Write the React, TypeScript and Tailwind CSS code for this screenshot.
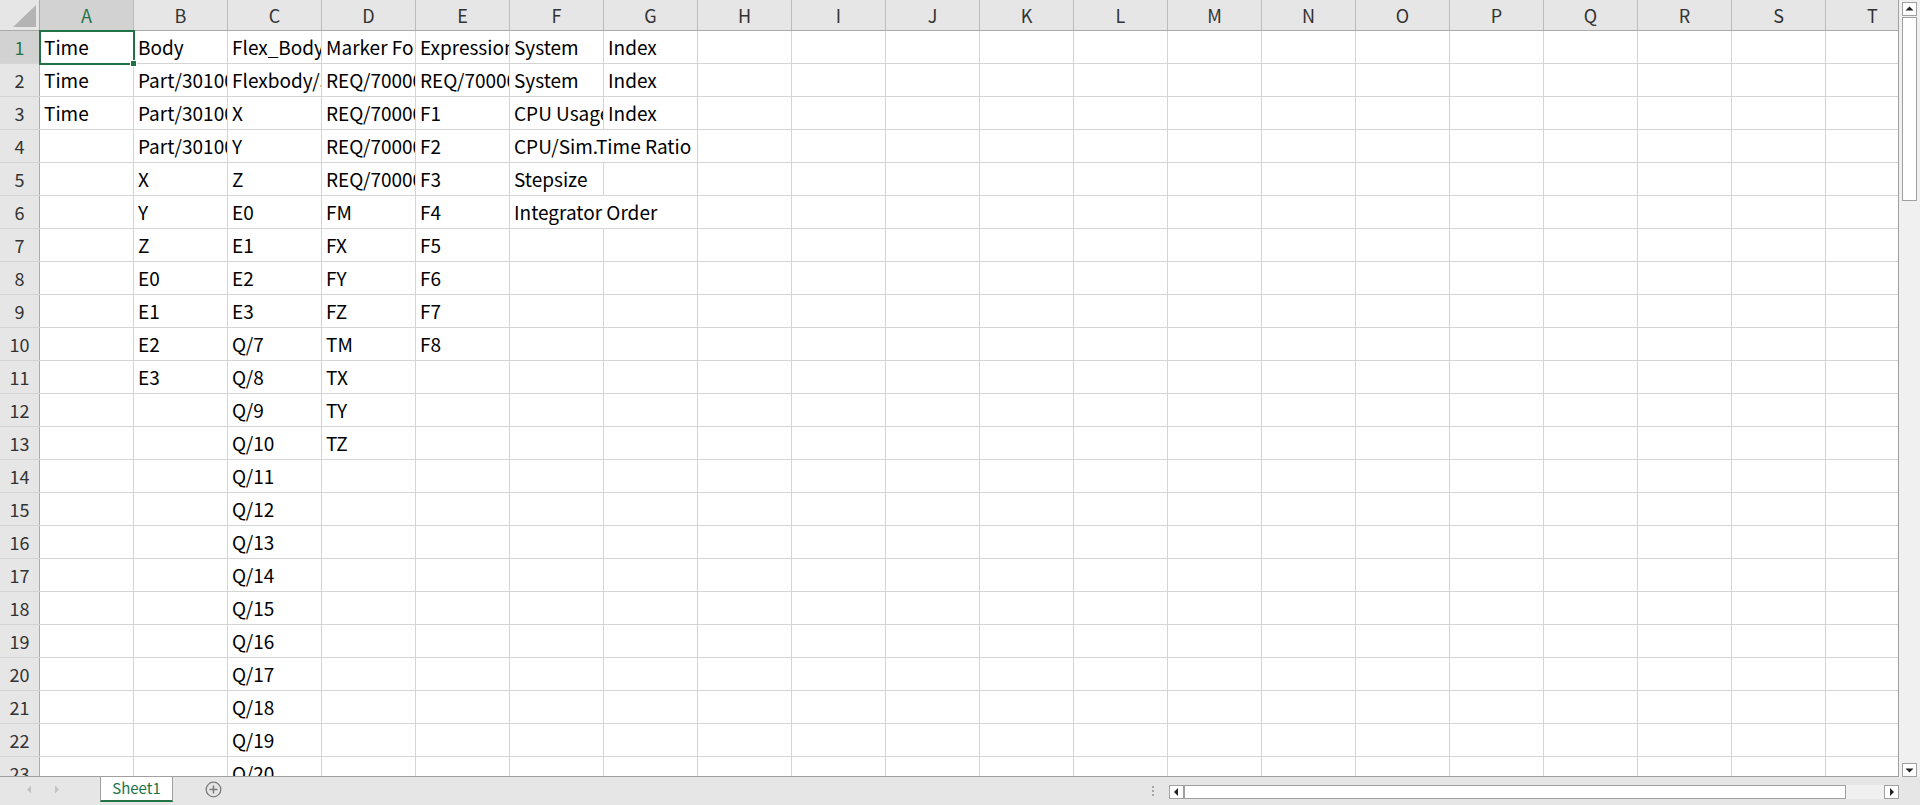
import { Fragment } from 'react'

const COLS = 'ABCDEFGHIJKLMNOPQRST'.split('')

// sheet contents, columns A..G (everything else is empty)
const ROWS: string[][] = [
  ['Time', 'Body', 'Flex_Body', 'Marker Force', 'Expressions', 'System', 'Index'],
  ['Time', 'Part/30100001', 'Flexbody/30200001', 'REQ/70000001', 'REQ/70000001', 'System', 'Index'],
  ['Time', 'Part/30100002', 'X', 'REQ/70000002', 'F1', 'CPU Usage', 'Index'],
  ['', 'Part/30100003', 'Y', 'REQ/70000003', 'F2', 'CPU/Sim.Time Ratio'],
  ['', 'X', 'Z', 'REQ/70000004', 'F3', 'Stepsize'],
  ['', 'Y', 'E0', 'FM', 'F4', 'Integrator Order'],
  ['', 'Z', 'E1', 'FX', 'F5'],
  ['', 'E0', 'E2', 'FY', 'F6'],
  ['', 'E1', 'E3', 'FZ', 'F7'],
  ['', 'E2', 'Q/7', 'TM', 'F8'],
  ['', 'E3', 'Q/8', 'TX'],
  ['', '', 'Q/9', 'TY'],
  ['', '', 'Q/10', 'TZ'],
  ...Array.from({ length: 10 }, (_, i) => ['', '', `Q/${11 + i}`]),
]

// text that spills over an empty neighbour cell
const SPANS: Record<string, number> = { '4-5': 2, '6-5': 2 }

function Row({ n, cells }: { n: number; cells: string[] }) {
  const out = []
  for (let c = 0; c < COLS.length; c++) {
    const span = SPANS[`${n}-${c}`] ?? 1
    out.push(
      <div
        key={c}
        className={
          'shrink-0 h-full border-r border-[#d4d4d4] px-[4px] flex items-center overflow-hidden whitespace-nowrap text-black ' +
          (span === 2 ? 'w-[188px]' : 'w-[94px]')
        }
      >
        {cells[c] ?? ''}
      </div>
    )
    c += span - 1
  }
  const active = n === 1
  return (
    <div className="flex h-[33px] shrink-0 border-b border-[#d4d4d4]">
      <div
        className={
          'shrink-0 w-[40px] h-full border-r border-[#ababab] flex items-center justify-center text-[18px] ' +
          (active ? 'bg-[#d2d2d2] text-[#217346]' : 'bg-[#e6e6e6] text-[#333]')
        }
      >
        {n}
      </div>
      {out}
    </div>
  )
}

function ArrowBtn({ dir }: { dir: 'up' | 'down' | 'left' | 'right' }) {
  const pts = {
    up: '3.5,9 7.5,5 11.5,9',
    down: '3.5,6 7.5,10 11.5,6',
    left: '9,3.5 5,7.5 9,11.5',
    right: '6,3.5 10,7.5 6,11.5',
  }[dir]
  return (
    <div className="shrink-0 w-[15px] h-[14px] bg-white border border-[#a0a0a0] flex items-center justify-center">
      <svg width="13" height="12" viewBox="1 1.5 13 12">
        <polygon points={pts} fill="#222" />
      </svg>
    </div>
  )
}

export default function App() {
  return (
    <div className="w-[1920px] h-[805px] flex flex-col bg-[#e6e6e6] overflow-hidden text-[19px] font-['Noto_Sans_CJK_JP','Noto_Sans',sans-serif]">
      <div className="flex h-[777px] shrink-0">
        {/* grid */}
        <div className="relative w-[1899px] h-full overflow-hidden bg-white border-r border-b border-[#a0a0a0] flex flex-col">
          <div className="flex h-[31px] shrink-0 border-b border-[#ababab] bg-[#e6e6e6] text-[18px]">
            <div className="shrink-0 w-[40px] h-full border-r border-[#ababab] flex items-end justify-end pr-[3px] pb-[3px]">
              <svg width="23" height="22" viewBox="0 0 23 22">
                <polygon points="23,0 23,22 0,22" fill="#b4b4b4" />
              </svg>
            </div>
            {COLS.map((c, i) => (
              <div
                key={c}
                className={
                  'shrink-0 w-[94px] h-full border-r border-[#bcbcbc] flex items-center justify-center ' +
                  (i === 0 ? 'bg-[#d2d2d2] text-[#217346]' : 'text-[#333]')
                }
              >
                {c}
              </div>
            ))}
          </div>
          {ROWS.map((cells, i) => (
            <Fragment key={i}>
              <Row n={i + 1} cells={cells} />
            </Fragment>
          ))}

          {/* active cell A1 */}
          <div className="absolute left-[39px] top-[30px] w-[96px] h-[35px] border-2 border-[#217346]">
            <div className="absolute -right-[4px] -bottom-[4px] w-[7px] h-[7px] bg-[#217346] border border-white" />
          </div>
        </div>

        {/* vertical scrollbar */}
        <div className="w-[21px] h-full bg-[#f0f0f0] flex flex-col pl-[3px] pr-[3px] pt-[2px]">
          <ArrowBtn dir="up" />
          <div className="h-[184px] mt-[1px] bg-white border border-[#a0a0a0]" />
          <div className="flex-1" />
          <ArrowBtn dir="down" />
        </div>
      </div>

      {/* sheet tabs + horizontal scrollbar */}
      <div className="flex-1 flex items-start">
        <div className="w-[100px] h-[25px] flex items-center gap-[22px] pl-[26px]">
          <svg width="6" height="9" viewBox="0 0 6 9">
            <polygon points="5,0.5 1,4.5 5,8.5" fill="#c2c2c2" />
          </svg>
          <svg width="6" height="9" viewBox="0 0 6 9">
            <polygon points="1,0.5 5,4.5 1,8.5" fill="#c2c2c2" />
          </svg>
        </div>
        <div className="w-[73px] h-[25px] bg-white border-x border-[#a0a0a0] border-b-2 border-b-[#217346] flex items-center justify-center text-[15px] text-[#217346]">
          Sheet1
        </div>
        <div className="h-[25px] flex items-center ml-[32px]">
          <svg width="17" height="17" viewBox="0 0 17 17">
            <circle cx="8.5" cy="8.5" r="7.3" fill="none" stroke="#7a7a7a" strokeWidth="1.3" />
            <path d="M8.5 4.5v8M4.5 8.5h8" stroke="#7a7a7a" strokeWidth="1.5" />
          </svg>
        </div>

        <div className="ml-auto mr-[21px] flex items-start">
          <div className="flex flex-col gap-[2px] mt-[9px] mr-[15px]">
            <div className="w-[2px] h-[2px] bg-[#a6a6a6]" />
            <div className="w-[2px] h-[2px] bg-[#a6a6a6]" />
            <div className="w-[2px] h-[2px] bg-[#a6a6a6]" />
          </div>
          <div className="w-[730px] h-[14px] mt-[8px] flex">
            <ArrowBtn dir="left" />
            <div className="w-[662px] h-full bg-white border border-[#a0a0a0]" />
            <div className="flex-1 bg-[#f0f0f0]" />
            <ArrowBtn dir="right" />
          </div>
        </div>
      </div>
    </div>
  )
}
